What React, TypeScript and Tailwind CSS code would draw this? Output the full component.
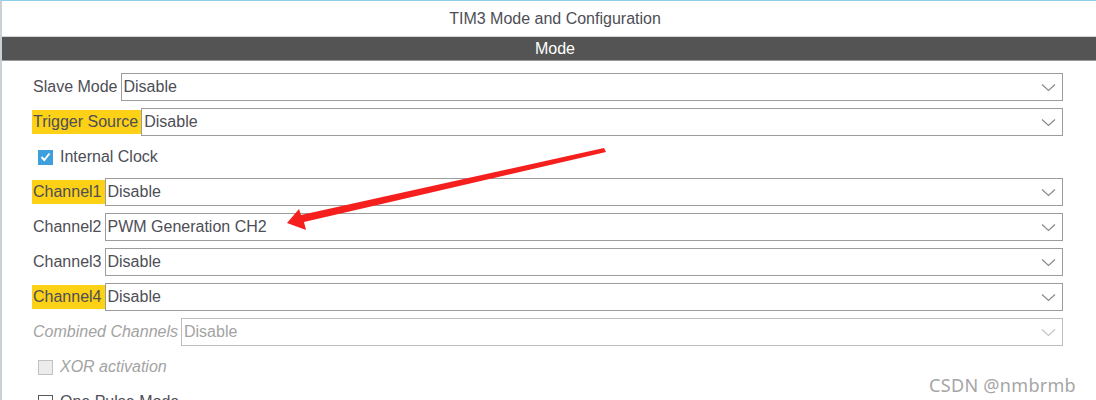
import React from 'react';

const font = { fontFamily: '"Liberation Sans", Arial, sans-serif' };

function Chevron({ muted }: { muted?: boolean }) {
  return (
    <svg width="15" height="9" viewBox="0 0 15 9" className="shrink-0">
      <path d="M1 1.5 L7.5 7.5 L14 1.5" fill="none" stroke={muted ? '#c4c4c4' : '#8a8a8a'} strokeWidth="1.2" />
    </svg>
  );
}

function Row({
  label,
  value,
  highlight,
  disabled,
}: {
  label: string;
  value: string;
  highlight?: boolean;
  disabled?: boolean;
}) {
  return (
    <div className="flex items-center h-[28px]">
      <span
        className={`leading-[24px] h-[24px] pl-px pr-[3px] whitespace-nowrap ${
          highlight ? 'bg-[#fcd116]' : ''
        } ${disabled ? 'italic text-[#a3a3a3]' : 'text-[#4e4e56]'}`}
      >
        {label}
      </span>
      <div
        className={`flex-1 h-[28px] flex items-center justify-between pl-[2px] pr-[6px] bg-white border ${
          disabled ? 'border-[#bdbdbd] text-[#a3a3a3]' : 'border-[#9c9c9c] text-[#4e4e56]'
        }`}
      >
        <span className="whitespace-nowrap">{value}</span>
        <Chevron muted={disabled} />
      </div>
    </div>
  );
}

function Check({ label, state }: { label: string; state: 'on' | 'disabled' | 'off' }) {
  return (
    <div className="flex items-center h-[28px] pl-[6px] gap-[7px]">
      {state === 'on' && (
        <span className="w-[15px] h-[15px] bg-[#3e9fdc] flex items-center justify-center">
          <svg width="11" height="10" viewBox="0 0 11 10">
            <path d="M1.5 5 L4.3 8 L9.5 1.5" fill="none" stroke="white" strokeWidth="2" />
          </svg>
        </span>
      )}
      {state === 'disabled' && (
        <span className="w-[15px] h-[15px] bg-[#ececec] border border-[#c2c2c2]" />
      )}
      {state === 'off' && <span className="w-[15px] h-[15px] bg-white border border-[#5a5a5a]" />}
      <span className={state === 'disabled' ? 'italic text-[#a3a3a3]' : 'text-[#4e4e56]'}>{label}</span>
    </div>
  );
}

export default function App() {
  return (
    <div
      className="relative w-[1096px] h-[400px] overflow-hidden bg-white border-t border-[#8dcfea] border-l-2 border-l-[#c9d0d6] text-[16px]"
      style={font}
    >
      <div className="h-[36px] flex items-center justify-center pl-[12px] pt-px text-[#4e4e56] border-b border-[#d6d6d6]">
        TIM3 Mode and Configuration
      </div>
      <div className="h-[24px] bg-[#535453] flex items-center justify-center pl-[12px] text-white border-b border-[#9a9a9a]">
        Mode
      </div>

      <div className="flex flex-col gap-[7px] pt-[12px] pl-[30px] pr-[33px]">
        <Row label="Slave Mode" value="Disable" />
        <Row label="Trigger Source" value="Disable" highlight />
        <Check label="Internal Clock" state="on" />
        <Row label="Channel1" value="Disable" highlight />
        <Row label="Channel2" value="PWM Generation CH2" />
        <Row label="Channel3" value="Disable" />
        <Row label="Channel4" value="Disable" highlight />
        <Row label="Combined Channels" value="Disable" disabled />
        <Check label="XOR activation" state="disabled" />
        <Check label="One Pulse Mode" state="off" />
      </div>

      {/* red annotation arrow */}
      <svg className="absolute left-0 top-0 pointer-events-none" width="1096" height="400">
        <polygon
          points="602,147 604,151 302,221 304,229 285,222 297,208 299,214"
          fill="#f5201e"
        />
      </svg>

      {/* watermark */}
      <div
        className="absolute right-[20px] top-[371px] text-[18px] text-[#a6a6a6] tracking-[0.3px]"
        style={{ fontFamily: '"Noto Sans", "Open Sans", sans-serif' }}
      >
        CSDN @nmbrmb
      </div>
    </div>
  );
}
